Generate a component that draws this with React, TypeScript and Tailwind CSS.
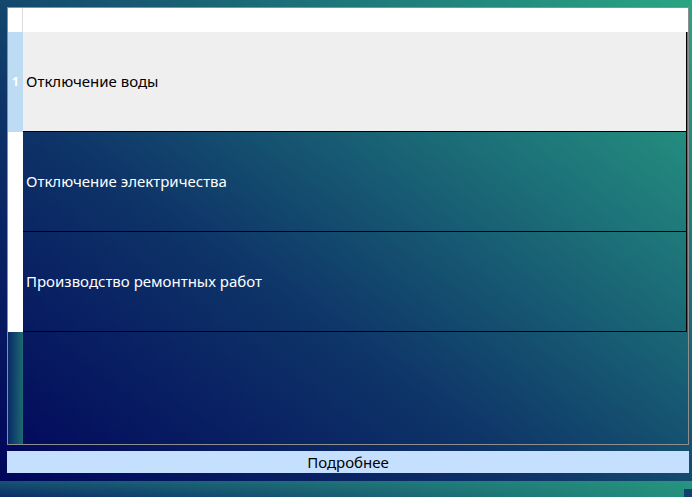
const rows = [
  { id: 1, title: "Отключение воды", selected: true },
  { id: 2, title: "Отключение электричества", selected: false },
  { id: 3, title: "Производство ремонтных работ", selected: false },
];

export default function App() {
  return (
    <div
      className="w-[692px] h-[497px] flex flex-col overflow-hidden bg-[linear-gradient(to_top_right,#01035a_0%,#0e3468_40%,#1c6f78_70%,#2aa583_100%)]"
      style={{ fontFamily: '"Noto Sans", "Open Sans", sans-serif' }}
    >
      <div className="pt-[7px] pl-[7px]">
        <div className="w-[682px] h-[438px] border border-[#8e8e8e] flex flex-col">
          {/* header */}
          <div className="h-[24px] flex bg-white shrink-0">
            <div className="w-[15px] border-r border-[#dcdcdc]" />
            <div className="flex-1" />
          </div>
          {rows.map((r) => (
            <div key={r.id} className="h-[100px] flex shrink-0">
              <div
                className={
                  r.selected
                    ? "w-[15px] bg-[#bddcf3] flex items-center justify-center text-[12px] font-bold text-white"
                    : "w-[15px] bg-white"
                }
              >
                {r.selected ? r.id : ""}
              </div>
              <div
                className={
                  r.selected
                    ? "flex-1 mr-px flex items-center pl-[3px] border-r border-b border-black bg-[#efefef] text-black text-[15px]"
                    : "flex-1 mr-px flex items-center pl-[3px] border-r border-b border-black text-white text-[15px]"
                }
              >
                {r.title}
              </div>
            </div>
          ))}
          <div className="flex-1 flex">
            <div className="w-[15px] bg-[linear-gradient(to_right,#0a2a66,#1d6a72)]" />
            <div className="flex-1" />
          </div>
        </div>
      </div>
      <div className="pl-[7px] mt-[6px]">
        <button className="block w-[682px] h-[22px] bg-[#c5e0fe] text-black text-[15px] leading-[22px] text-center">
          Подробнее
        </button>
      </div>
      <div className="mt-[8px] h-[16px] relative bg-[linear-gradient(to_right,#0c2c68,#1a6274_55%,#24907c)]">
        <div className="absolute inset-0 bg-[linear-gradient(to_bottom,rgba(40,160,130,0.35),rgba(0,0,0,0))]" />
        <div className="absolute right-0 bottom-0 w-[8px] h-[8px] bg-[#123f70]" />
      </div>
    </div>
  );
}
